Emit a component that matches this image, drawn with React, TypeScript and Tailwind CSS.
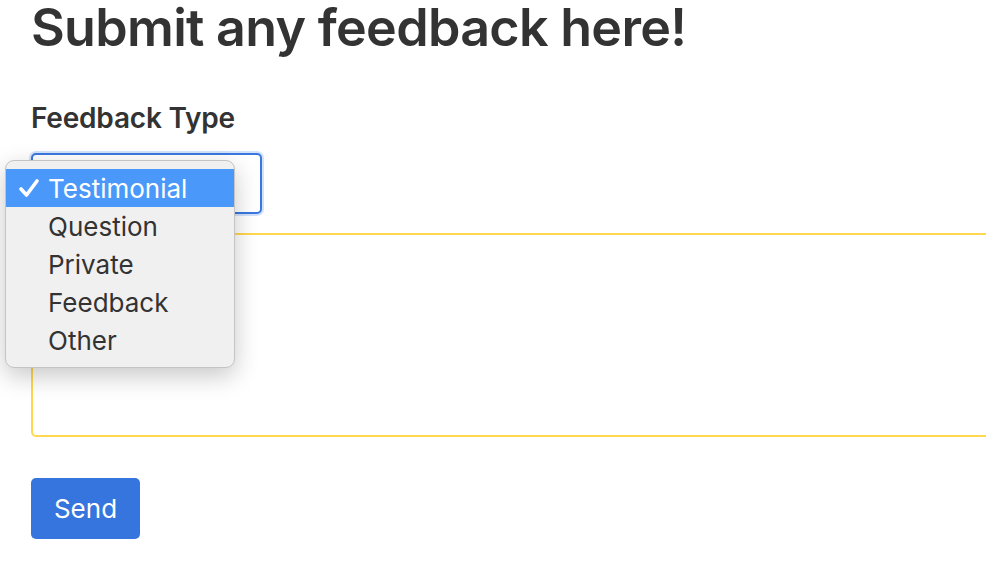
const options = ["Testimonial", "Question", "Private", "Feedback", "Other"];

const FeedbackForm = () => {
  return (
    <div className="relative flex flex-col items-start pl-[31px] text-[#333333] [font-family:Inter,'Liberation_Sans',sans-serif]">
      <h1 className="text-[52px] font-semibold leading-[56px] tracking-[-0.7px] text-[#333333]">
        Submit any feedback here!
      </h1>

      <label className="mt-[46px] text-[28px] font-semibold leading-[32px] tracking-[-0.2px]">Feedback Type</label>

      <div className="relative mt-[19px]">
        <div className="h-[61px] w-[231px] rounded-[5px] border-2 border-[#3a78e0] bg-white shadow-[0_0_0_2px_rgba(80,140,240,0.25)]" />

        {/* open native-looking dropdown */}
        <div className="absolute left-[-26px] top-[7px] z-10 w-[230px] rounded-[9px] border border-[#c4c4c4] bg-[#f0f0f0] py-[8px] shadow-[0_8px_24px_rgba(0,0,0,0.22)]">
          {options.map((opt, i) => (
            <div
              key={opt}
              className={
                i === 0
                  ? "flex h-[38px] items-center bg-[#4b98fb] text-[26px] text-white"
                  : "flex h-[38px] items-center text-[26px] text-[#333333]"
              }
            >
              <span className="flex w-[42px] justify-center pl-[4px]">
                {i === 0 && (
                  <svg width="22" height="20" viewBox="0 0 22 20" fill="none">
                    <path d="M3 11 L8.5 17 L19 3" stroke="white" strokeWidth="3.6" strokeLinecap="round" strokeLinejoin="round" />
                  </svg>
                )}
              </span>
              <span>{opt}</span>
            </div>
          ))}
        </div>
      </div>

      <textarea className="mt-[19px] h-[204px] w-[1000px] resize-none rounded-[5px] border-2 border-[#ffd84f] bg-white outline-none" />

      <button className="mt-[41px] h-[61px] w-[109px] rounded-[5px] bg-[#3575dd] text-[26px] text-white">
        Send
      </button>
    </div>
  );
};

export default function App() {
  return (
    <div className="h-[582px] w-[986px] overflow-hidden bg-white">
      <FeedbackForm />
    </div>
  );
}
